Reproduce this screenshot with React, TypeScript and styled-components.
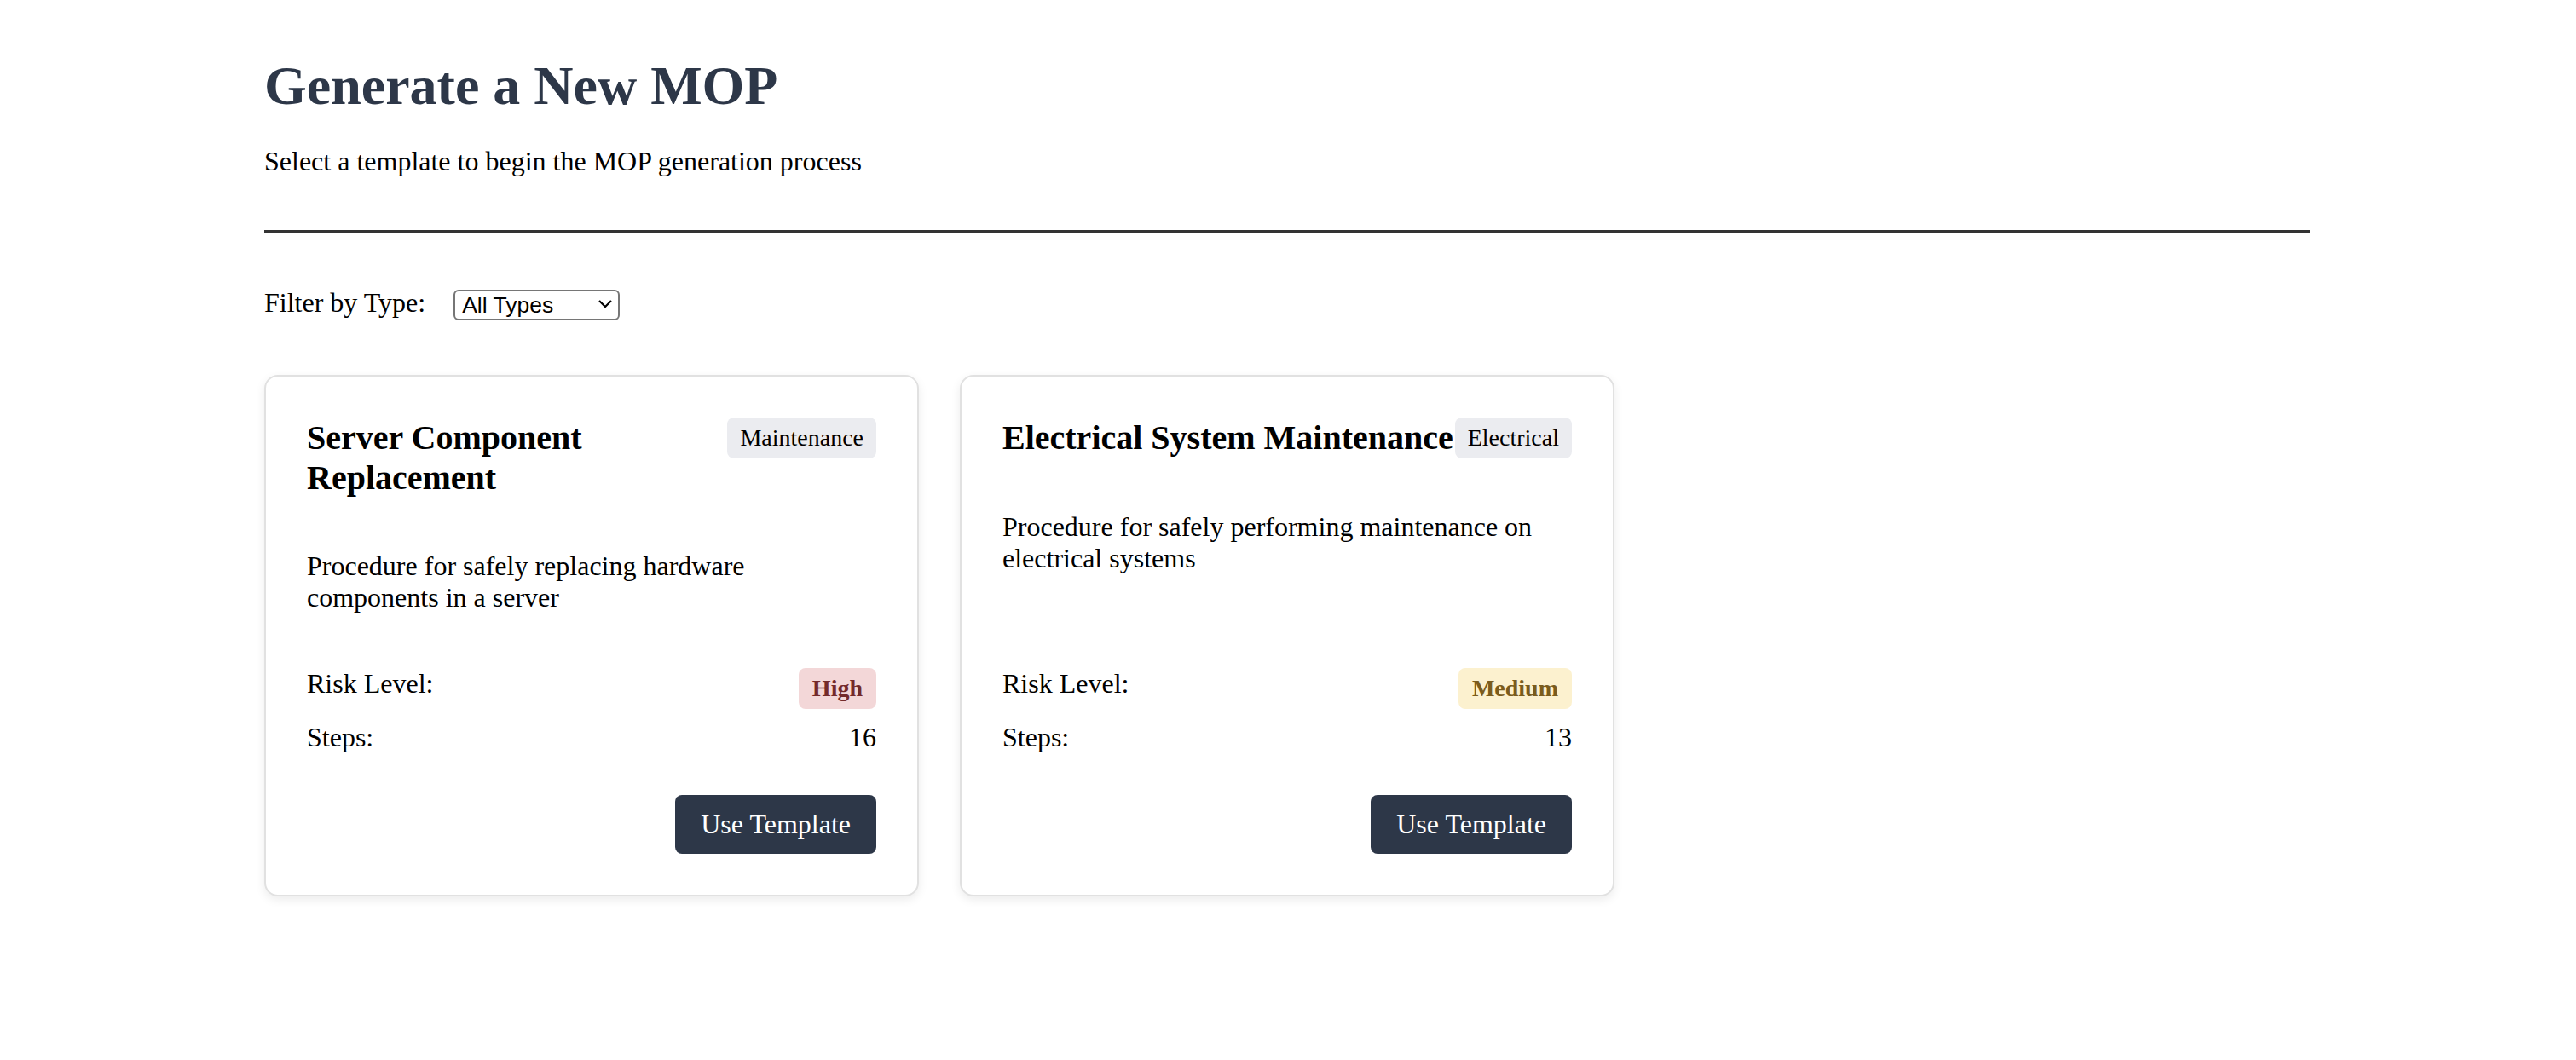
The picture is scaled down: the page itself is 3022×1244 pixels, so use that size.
import React, { useState } from "react";
import styled, { createGlobalStyle } from "styled-components";

interface Template {
  id: string;
  name: string;
  type: string;
  description: string;
  risk: "High" | "Medium" | "Low";
  steps: number;
}

const templates: Template[] = [
  {
    id: "server-component",
    name: "Server Component Replacement",
    type: "Maintenance",
    description: "Procedure for safely replacing hardware components in a server",
    risk: "High",
    steps: 16,
  },
  {
    id: "electrical-system",
    name: "Electrical System Maintenance",
    type: "Electrical",
    description: "Procedure for safely performing maintenance on electrical systems",
    risk: "Medium",
    steps: 13,
  },
];

const riskColors = {
  High: { bg: "#f3d7d8", fg: "#742a2a" },
  Medium: { bg: "#fcf1cf", fg: "#7a5c1c" },
  Low: { bg: "#d7f0dd", fg: "#22543d" },
};

const GlobalStyle = createGlobalStyle`
  html, body {
    margin: 0;
    padding: 0;
    background: #fff;
  }

  body {
    font-family: "Liberation Serif", "Times New Roman", serif;
    font-size: 32px;
    color: #000;
  }
`;

const Page = styled.div`
  max-width: 2400px;
  margin: 0 calc(50% - 1199px) 0 calc(50% - 1201px);
  padding: 64px 0 80px;
`;

const Header = styled.header`
  padding-bottom: 62px;
  border-bottom: 4px solid #333;
  margin-bottom: 63px;

  h1 {
    margin: 0 0 33px;
    font-size: 64px;
    font-weight: 700;
    color: #2d3748;
  }

  p {
    margin: 0;
    font-size: 32px;
  }
`;

const FilterRow = styled.div`
  display: flex;
  align-items: center;
  gap: 33px;
  margin-bottom: 66px;
`;

const SelectWrap = styled.div`
  position: relative;
  width: 195px;
  height: 36px;

  svg {
    position: absolute;
    top: 14px;
    right: 9px;
    pointer-events: none;
  }
`;

const Select = styled.select`
  appearance: none;
  width: 100%;
  height: 100%;
  box-sizing: border-box;
  padding: 0 0 0 8px;
  border: 2px solid #767676;
  border-radius: 6px;
  background: #fff;
  color: #000;
  font-family: "Liberation Sans", Arial, sans-serif;
  font-size: 26.5px;
`;

const Grid = styled.div`
  display: grid;
  grid-template-columns: repeat(auto-fill, minmax(700px, 1fr));
  gap: 48px;
`;

const Card = styled.div`
  display: flex;
  flex-direction: column;
  box-sizing: border-box;
  padding: 48px;
  border: 2px solid #e1e1e1;
  border-radius: 16px;
  background: #fff;
  box-shadow: 0 4px 12px rgba(0, 0, 0, 0.08);
`;

const CardHeader = styled.div`
  display: flex;
  justify-content: space-between;
  align-items: flex-start;
  margin-bottom: 62px;
`;

const CardTitle = styled.h3`
  margin: 0;
  font-size: 40px;
  font-weight: 700;
`;

const TypeBadge = styled.span`
  flex-shrink: 0;
  padding: 8px 15px;
  border-radius: 8px;
  background: #ebecf0;
  font-size: 28px;
  white-space: nowrap;
`;

const Description = styled.p`
  flex-grow: 1;
  margin: 0 0 64px;
  font-size: 32px;
`;

const Meta = styled.div`
  display: flex;
  flex-direction: column;
  gap: 15px;
`;

const MetaRow = styled.div`
  display: flex;
  justify-content: space-between;
  align-items: flex-start;
`;

const RiskBadge = styled.span<{ $level: Template["risk"] }>`
  padding: 8px 16px;
  border-radius: 8px;
  background: ${(p) => riskColors[p.$level].bg};
  color: ${(p) => riskColors[p.$level].fg};
  font-size: 28px;
  font-weight: 700;
`;

const Actions = styled.div`
  display: flex;
  justify-content: flex-end;
  margin-top: 49px;
`;

const UseButton = styled.button`
  padding: 16px 30px;
  border: none;
  border-radius: 8px;
  background: #2d3748;
  color: #fff;
  font-family: "Liberation Serif", "Times New Roman", serif;
  font-size: 32px;
  line-height: 37px;
  cursor: pointer;
`;

const App: React.FC = () => {
  const [filter, setFilter] = useState<string>("all");

  const shown = templates.filter((t) => filter === "all" || t.type === filter);

  return (
    <Page>
      <GlobalStyle />
      <Header>
        <h1>Generate a New MOP</h1>
        <p>Select a template to begin the MOP generation process</p>
      </Header>

      <FilterRow>
        <span>Filter by Type:</span>
        <SelectWrap>
          <Select value={filter} onChange={(e) => setFilter(e.target.value)}>
            <option value="all">All Types</option>
            <option value="Maintenance">Maintenance</option>
            <option value="Electrical">Electrical</option>
          </Select>
          <svg width="16" height="9" viewBox="0 0 16 9" fill="none">
            <path d="M1 1l7 7 7-7" stroke="#000" strokeWidth="2.2" />
          </svg>
        </SelectWrap>
      </FilterRow>

      <Grid>
        {shown.map((t) => (
          <Card key={t.id}>
            <CardHeader>
              <CardTitle>{t.name}</CardTitle>
              <TypeBadge>{t.type}</TypeBadge>
            </CardHeader>
            <Description>{t.description}</Description>
            <Meta>
              <MetaRow>
                <span>Risk Level:</span>
                <RiskBadge $level={t.risk}>{t.risk}</RiskBadge>
              </MetaRow>
              <MetaRow>
                <span>Steps:</span>
                <span>{t.steps}</span>
              </MetaRow>
            </Meta>
            <Actions>
              <UseButton>Use Template</UseButton>
            </Actions>
          </Card>
        ))}
      </Grid>
    </Page>
  );
};

export default App;
